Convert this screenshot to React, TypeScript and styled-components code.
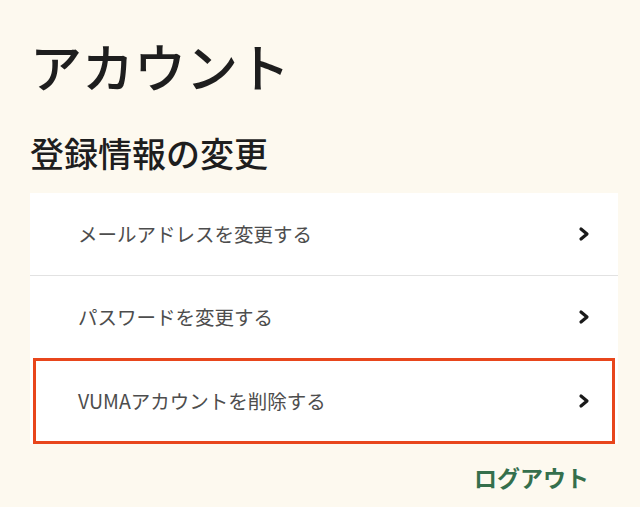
import React from "react";
import styled, { createGlobalStyle } from "styled-components";

const Global = createGlobalStyle`
  html, body {
    margin: 0;
    padding: 0;
    background: #fdf9ef;
  }
  body {
    font-family: "Noto Sans CJK JP", "Noto Sans", sans-serif;
    -webkit-font-smoothing: antialiased;
  }
`;

const Page = styled.div`
  width: 640px;
  height: 507px;
  box-sizing: border-box;
  padding: 40px 22px 0 30px;
  display: flex;
  flex-direction: column;
  background: #fdf9ef;
  overflow: hidden;
`;

const Title = styled.h1`
  margin: 0;
  font-size: 52px;
  line-height: 52px;
  font-weight: 500;
  color: #1e1e1e;
  letter-spacing: 0;
`;

const Subtitle = styled.h2`
  margin: 44px 0 0 0;
  font-size: 34px;
  line-height: 34px;
  font-weight: 500;
  color: #1e1e1e;
`;

const Card = styled.div`
  margin-top: 23px;
  background: #ffffff;
  display: flex;
  flex-direction: column;
`;

const Row = styled.div<{ $highlight?: boolean }>`
  height: ${(p) => (p.$highlight ? "86px" : "82px")};
  box-sizing: border-box;
  display: flex;
  align-items: center;
  justify-content: space-between;
  padding: ${(p) => (p.$highlight ? "0 22px 0 42px" : "0 28px 0 48px")};
  margin: ${(p) => (p.$highlight ? "0 3px" : "0")};
  border: ${(p) => (p.$highlight ? "3px solid #e8461c" : "none")};
  background: #ffffff;
`;

const Divider = styled.div`
  height: 1px;
  background: #e2e2e2;
`;

const Label = styled.span`
  font-size: 19.5px;
  line-height: 20px;
  color: #4d4d4d;
  font-weight: 400;
`;

const ChevronIcon = styled.svg`
  width: 12px;
  height: 16px;
  flex: none;
`;

const Chevron = () => (
  <ChevronIcon viewBox="0 0 12 16">
    <polyline
      points="3,3 9,8 3,13"
      fill="none"
      stroke="#1a1a1a"
      strokeWidth="3.2"
      strokeLinecap="round"
      strokeLinejoin="round"
    />
  </ChevronIcon>
);

const Footer = styled.div`
  display: flex;
  justify-content: flex-end;
  padding-right: 29px;
  margin-top: 22px;
`;

const Logout = styled.a`
  font-size: 23px;
  line-height: 23px;
  font-weight: 700;
  color: #356f4c;
  text-decoration: none;
`;

const items = [
  { label: "メールアドレスを変更する" },
  { label: "パスワードを変更する" },
  { label: "VUMAアカウントを削除する", highlight: true },
];

export default function App() {
  return (
    <>
      <Global />
      <Page>
        <Title>アカウント</Title>
        <Subtitle>登録情報の変更</Subtitle>
        <Card>
          {items.map((it, i) => (
            <React.Fragment key={it.label}>
              <Row $highlight={it.highlight}>
                <Label>{it.label}</Label>
                <Chevron />
              </Row>
              {i === 0 && <Divider />}
            </React.Fragment>
          ))}
        </Card>
        <Footer>
          <Logout href="#">ログアウト</Logout>
        </Footer>
      </Page>
    </>
  );
}
